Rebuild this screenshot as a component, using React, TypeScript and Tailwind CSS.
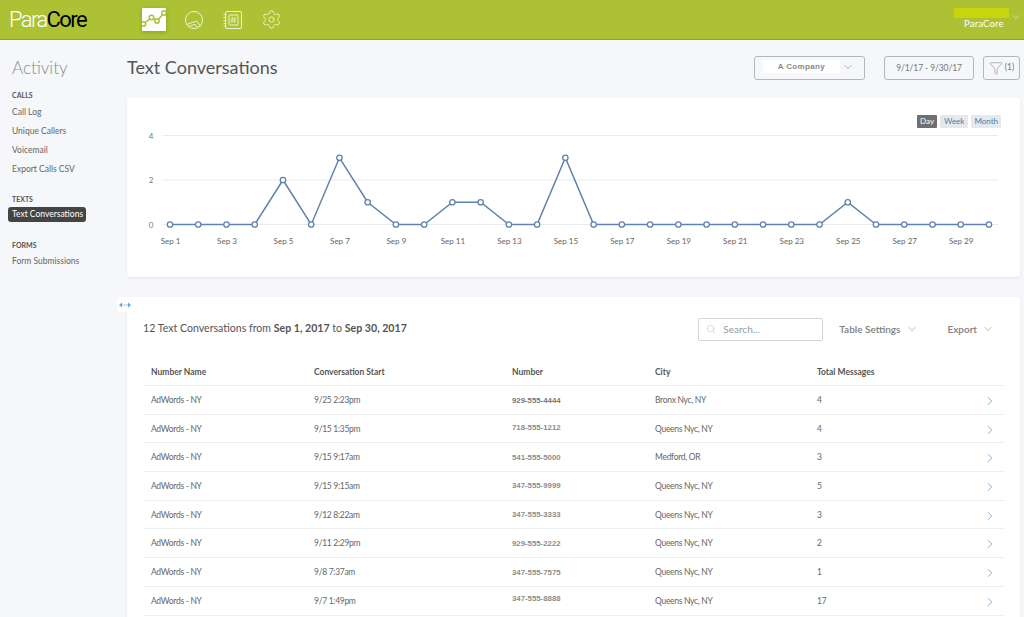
import React from "react";
import { ChevronDown, ChevronRight, Funnel, Search, Settings } from "lucide-react";

const values = [0, 0, 0, 0, 2, 0, 3, 1, 0, 0, 1, 1, 0, 0, 3, 0, 0, 0, 0, 0, 0, 0, 0, 0, 1, 0, 0, 0, 0, 0];

const rows = [
  { start: "9/25 2:23pm", number: "929-555-4444", city: "Bronx Nyc, NY", total: "4", numberClass: "text-[#777777]" },
  { start: "9/15 1:35pm", number: "718-555-1212", city: "Queens Nyc, NY", total: "4", numberClass: "pb-[3px] text-[#8c8c8c]" },
  { start: "9/15 9:17am", number: "541-555-5000", city: "Medford, OR", total: "3", numberClass: "text-[#8c8c8c]" },
  { start: "9/15 9:15am", number: "347-555-9999", city: "Queens Nyc, NY", total: "5", numberClass: "pb-[1px] text-[#8c8c8c]" },
  { start: "9/12 8:22am", number: "347-555-3333", city: "Queens Nyc, NY", total: "3", numberClass: "text-[#8c8c8c]" },
  { start: "9/11 2:29pm", number: "929-555-2222", city: "Queens Nyc, NY", total: "2", numberClass: "text-[#8c8c8c]" },
  { start: "9/8 7:37am", number: "347-555-7575", city: "Queens Nyc, NY", total: "1", numberClass: "text-[#8c8c8c]" },
  { start: "9/7 1:49pm", number: "347-555-8888", city: "Queens Nyc, NY", total: "17", numberClass: "pb-[4px] text-[#8c8c8c]" },
];

const px = (i: number) => 43 + i * 28.24;
const py = (v: number) => 126.5 - v * 22.25;

const Chart = () => (
  <svg width="893" height="178" viewBox="0 0 893 178" className="block">
    {[0, 2, 4].map((v) => (
      <g key={v}>
        <line x1="36" x2="871" y1={py(v)} y2={py(v)} stroke="#e8eaec" />
        <text x="24" y={py(v) + 3} textAnchor="middle" fontSize="8" fill="#777">
          {v}
        </text>
      </g>
    ))}
    <polyline
      points={values.map((v, i) => `${px(i)},${py(v)}`).join(" ")}
      fill="none"
      stroke="#5f83ad"
      strokeWidth="1.5"
    />
    {values.map((v, i) => (
      <circle key={i} cx={px(i)} cy={py(v)} r="2.7" fill="#fff" stroke="#5f83ad" strokeWidth="1.3" />
    ))}
    {values.map((_, i) =>
      i % 2 === 0 ? (
        <text key={i} x={px(i) + 0.5} y="146" textAnchor="middle" fontSize="8" fill="#666">
          Sep {i + 1}
        </text>
      ) : null
    )}
  </svg>
);

const NavLink = ({ label, active }: { label: string; active?: boolean }) => (
  <div
    className={
      active
        ? "ml-[8px] w-[78px] h-[15px] leading-[15px] pl-[4px] rounded-[3px] bg-[#444444] text-white text-[8.5px] whitespace-nowrap"
        : "ml-[12px] h-[19px] leading-[19px] text-[8.5px] text-[#666666] whitespace-nowrap"
    }
  >
    {label}
  </div>
);

const NavHeading = ({ label }: { label: string }) => (
  <div className="ml-[12px] h-[12px] leading-[12px] text-[7px] font-bold text-[#555555]">{label}</div>
);

export default function App() {
  return (
    <div
      className="w-[1024px] h-[617px] overflow-hidden bg-[#f5f7fa] flex flex-col"
      style={{ fontFamily: "Lato, 'Open Sans', sans-serif" }}
    >
      {/* Header */}
      <div className="h-[40px] shrink-0 bg-[#acc234] border-b border-[#8fa32a] flex items-center">
        <div
          className="w-[142px] pl-[9px] text-[22px] tracking-[-1.6px] leading-none text-white font-light"
          style={{ fontFamily: "Roboto, sans-serif" }}
        >
          Para<span className="text-black font-normal">Core</span>
        </div>
        <div className="w-[24px] h-[23px] bg-white rounded-[1px] shadow-[0_1px_4px_rgba(0,0,0,0.2)]">
          <svg width="24" height="23" viewBox="0 0 24 23" fill="none" stroke="#acc234" strokeWidth="1.5" className="overflow-visible">
            <polyline points="1.5,16 9.5,9.5 15,13 22,5" />
            <circle cx="1.5" cy="16" r="2.2" fill="#fff" />
            <circle cx="9.5" cy="9.5" r="2.2" fill="#fff" />
            <circle cx="15" cy="13" r="2.2" fill="#fff" />
            <circle cx="22" cy="5" r="2.2" fill="#fff" />
          </svg>
        </div>
        <svg width="20" height="20" viewBox="0 0 20 20" fill="none" stroke="#eef3cf" strokeWidth="1" className="ml-[18px]">
          <circle cx="10" cy="10" r="8.5" />
          <path d="M2.7 14.5L12.7 11L17 16.7M4.3 16.7L11 14.3L14.3 18.3" />
        </svg>
        <svg width="20" height="20" viewBox="0 0 20 20" fill="none" stroke="#eef3cf" strokeWidth="1" className="ml-[19px]">
          <rect x="2.5" y="1.5" width="16" height="17" rx="1.5" />
          <path d="M0.5 4.5h3M0.5 7.5h3M0.5 10.5h3M0.5 13.5h3M0.5 16h3" />
          <rect x="6" y="5" width="9" height="10" rx="1" />
          <path d="M9.5 7l-.7 6M12.2 7l-.7 6M7.8 9h5.2M7.5 11h5.2" strokeWidth="0.8" />
        </svg>
        <Settings size={21} strokeWidth={1.1} color="#eef3cf" className="ml-[18px]" />
        <div className="ml-auto w-[70px] relative h-full text-white">
          <div className="w-[55px] h-[10px] mt-[8px] bg-[#c8d40e]" />
          <div className="text-[9.5px] leading-[12px] ml-[10px] tracking-[0.2px]">ParaCore</div>
          <ChevronDown size={12} strokeWidth={1} className="absolute right-[2px] top-[11px]" />
        </div>
      </div>

      <div className="flex flex-1 min-h-0">
        {/* Sidebar */}
        <div className="w-[127px] shrink-0 pt-[15px]">
          <div className="ml-[12px] h-[25px] leading-[25px] text-[17px] font-light text-[#8a8a8a]">Activity</div>
          <div className="mt-[9px]">
            <NavHeading label="CALLS" />
            <div className="mt-[2px]">
              <NavLink label="Call Log" />
              <NavLink label="Unique Callers" />
              <NavLink label="Voicemail" />
              <NavLink label="Export Calls CSV" />
            </div>
          </div>
          <div className="mt-[14px]">
            <NavHeading label="TEXTS" />
            <div className="mt-[2px]">
              <NavLink label="Text Conversations" active />
            </div>
          </div>
          <div className="mt-[17px]">
            <NavHeading label="FORMS" />
            <div className="mt-[1px]">
              <NavLink label="Form Submissions" />
            </div>
          </div>
        </div>

        {/* Main */}
        <div className="flex-1 min-w-0 pr-[4px]">
          <div className="h-[58px] flex items-center pb-[3px]">
            <h1 className="text-[18px] font-normal text-[#555555]">Text Conversations</h1>
            <div className="ml-auto flex items-center">
              <div className="w-[111px] h-[24px] rounded-[3px] border border-[#b5b8bb] flex items-center pl-[8px] pb-[2px]">
                <div
                  className="w-[77px] h-[13px] bg-white text-center text-[8px] font-bold leading-[13px] text-[#888888] tracking-[0.35px]"
                  style={{ fontFamily: "'Liberation Sans', sans-serif" }}
                >
                  A Company
                </div>
                <ChevronDown size={12} strokeWidth={1.1} className="ml-[2px] text-[#777777]" />
              </div>
              <div className="ml-[19px] w-[90px] h-[24px] rounded-[3px] border border-[#b5b8bb] text-center leading-[22px] text-[8.5px] tracking-[-0.1px] text-[#777777]">
                9/1/17 - 9/30/17
              </div>
              <div className="ml-[9px] w-[37px] h-[24px] rounded-[3px] border border-[#b5b8bb] flex items-center justify-center gap-[2px] text-[8.5px] text-[#777777]">
                <Funnel size={14} strokeWidth={0.9} />
                (1)
              </div>
            </div>
          </div>

          {/* Chart card */}
          <div className="w-[893px] h-[179px] bg-white rounded-[3px] shadow-[0_1px_3px_rgba(0,0,0,0.08)] relative">
            <Chart />
            <div className="absolute right-[19px] top-[17px] flex gap-[3px] text-[8px] leading-[13px]">
              <span className="h-[13px] px-[3px] rounded-[1px] bg-[#6f6f6f] text-white">Day</span>
              <span className="h-[13px] px-[4px] rounded-[1px] bg-[#e6e9ec] text-[#3f7fb0]">Week</span>
              <span className="h-[13px] px-[3px] rounded-[1px] bg-[#e6e9ec] text-[#3f7fb0]">Month</span>
            </div>
          </div>

          {/* Table card */}
          <div className="mt-[20px] w-[893px] bg-white rounded-t-[3px] shadow-[0_1px_3px_rgba(0,0,0,0.08)] relative pl-[16px] pr-[16px] h-[400px]">
            <div className="absolute left-[-10px] top-0 w-[16px] h-[15px] rounded-[3px] bg-white flex items-center justify-center">
              <svg width="12" height="6" viewBox="0 0 12 6" fill="#6aa6d6" stroke="none">
                <path d="M0 3L3 .5v5zM12 3L9 .5v5z" />
                <rect x="3" y="2.5" width="6" height="1" fill="#a9cbe6" />
              </svg>
            </div>
            <div className="h-[62px] flex items-center pt-[2px]">
              <div className="text-[10.6px] text-[#555555]">
                12 Text Conversations from <b className="font-bold">Sep 1, 2017</b> to{" "}
                <b className="font-bold">Sep 30, 2017</b>
              </div>
              <div className="ml-auto w-[125px] h-[23px] rounded-[2px] border border-[#d3d5d7] flex items-center pl-[7px] text-[10px] text-[#999999]">
                <Search size={10} strokeWidth={1} className="text-[#aaaaaa]" />
                <span className="ml-[7px]">Search...</span>
              </div>
              <div className="ml-[16px] flex items-center text-[10px] font-semibold text-[#808080]">
                Table Settings
                <ChevronDown size={12} strokeWidth={1.1} className="ml-[6px]" />
              </div>
              <div className="ml-[29px] mr-[10px] flex items-center text-[10px] font-semibold text-[#808080]">
                Export
                <ChevronDown size={12} strokeWidth={1.1} className="ml-[5px]" />
              </div>
            </div>
            <div className="grid grid-cols-[163px_198px_143px_162px_1fr] h-[27px] items-center pl-[8px] pt-[1px] border-b border-[#eeeeee] text-[8.5px] font-bold text-[#555555]">
              <div>Number Name</div>
              <div>Conversation Start</div>
              <div>Number</div>
              <div>City</div>
              <div>Total Messages</div>
            </div>
            {rows.map((r) => (
              <div
                key={r.number}
                className="grid grid-cols-[163px_198px_143px_162px_1fr] h-[28.7px] items-center pl-[8px] pt-[1px] border-b border-[#eeeeee] text-[8.5px] tracking-[-0.3px] text-[#666666]"
              >
                <div>AdWords - NY</div>
                <div>{r.start}</div>
                <div
                  className={"font-bold text-[7.8px] tracking-normal " + r.numberClass}
                  style={{ fontFamily: "'Liberation Sans', sans-serif" }}
                >
                  {r.number}
                </div>
                <div>{r.city}</div>
                <div className="flex items-center justify-between pr-[7px]">
                  {r.total}
                  <ChevronRight size={14} strokeWidth={1.2} className="text-[#4f8fc0] mt-[1px]" />
                </div>
              </div>
            ))}
          </div>
        </div>
      </div>
    </div>
  );
}
